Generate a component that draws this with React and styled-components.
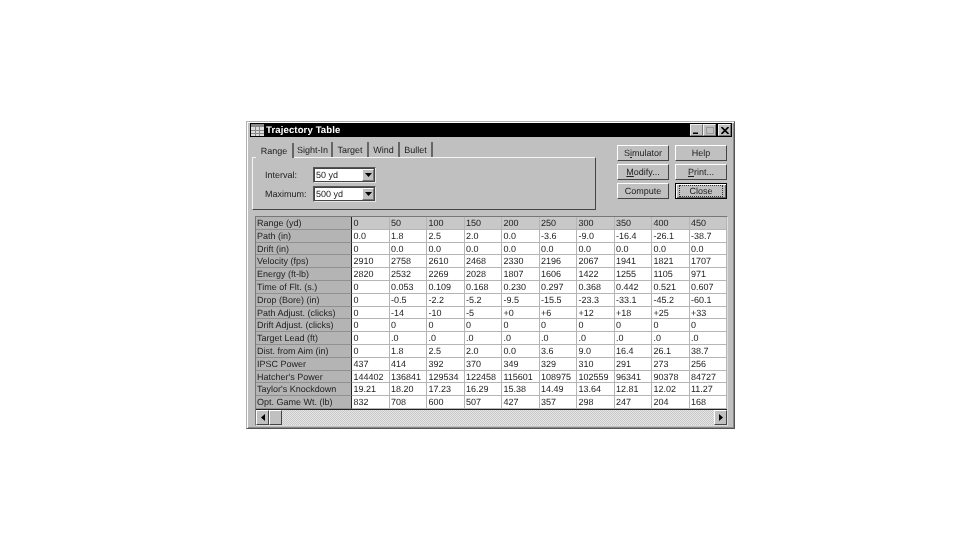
import React from 'react';
import styled, { createGlobalStyle } from 'styled-components';

const Global = createGlobalStyle`
  html, body { margin: 0; padding: 0; background: #fff; }
  body { font-family: "Liberation Sans", Arial, sans-serif; width: 978px; height: 550px; overflow: hidden; text-rendering: geometricPrecision; }
`;
const Page = styled.div`
  width: 978px; height: 550px; padding: 121px 0 0 246px; box-sizing: border-box;
`;
const Window = styled.div`
  width: 489px; height: 308px; box-sizing: border-box; background: #c0c0c0;
  border: 1px solid #b0b0b0; border-right-color: #555; border-bottom-color: #555;
  box-shadow: inset 1px 1px 0 #fff, inset -1px -1px 0 #888;
  padding: 1px 2px 0 3px; display: flex; flex-direction: column;
  filter: blur(0.45px);
`;
const TitleBar = styled.div`
  height: 14px; flex: none; background: #000; display: flex; align-items: center; padding: 0 1px 0 1px; gap: 2px;
`;
const TitleText = styled.span`
  color: #fff; font: bold 9.6px "Liberation Sans", Arial, sans-serif; flex: 1; letter-spacing: 0.1px;
`;
const CapButtons = styled.div`display: flex;`;
const CapButton = styled.div`
  width: 13px; height: 12px; background: #c0c0c0; box-sizing: border-box; margin-left: ${p => p.$gap || 0}px;
  border: 1px solid; border-color: #eee #777 #777 #eee; display: flex; align-items: center; justify-content: center;
`;
const Content = styled.div`display: flex; padding: 5px 0 0 2px; height: 79px; flex: none; box-sizing: border-box;`;
const TabArea = styled.div`width: 344px; display: flex; flex-direction: column;`;
const TabRow = styled.div`height: 15px; display: flex; padding-left: 4px; align-items: flex-end; flex: none;`;
const Tab = styled.div`
  height: 15px; width: ${p => p.$w}px; box-sizing: border-box; font-size: 9px; color: #222;
  display: flex; align-items: center; justify-content: center;
  border-right: 2px solid #666;
  background: #c0c0c0; position: relative; margin-bottom: ${p => p.$active ? -1 : 0}px; z-index: ${p => p.$active ? 1 : 0};
`;
const TabPanel = styled.div`
  height: 53px; box-sizing: border-box; border: 1px solid; border-color: #f4f4f4 #444 #444 #f4f4f4;
  padding: 9px 0 0 12px; display: flex; flex-direction: column; gap: 3px;
`;
const FieldRow = styled.div`display: flex; align-items: center; height: 16px;`;
const FieldLabel = styled.span`width: 48px; font-size: 9px; color: #222;`;
const Combo = styled.div`
  width: 63px; height: 16px; box-sizing: border-box; background: #fff; border: 2px solid; border-color: #555 #e4e4e4 #e4e4e4 #555;
  outline: 1px solid #444; outline-offset: -2px;
  display: flex; align-items: center; justify-content: space-between; font-size: 9px; color: #222; padding-left: 1px;
`;
const ComboArrow = styled.div`
  width: 12px; height: 12px; background: #c0c0c0; border: 1px solid; border-color: #fff #777 #777 #fff; box-sizing: border-box;
  display: flex; align-items: center; justify-content: center;
`;
const ButtonGrid = styled.div`
  margin-left: 21px; margin-top: 3px; display: grid; grid-template-columns: 52px 52px; grid-auto-rows: 16px; column-gap: 6px; row-gap: 3px; align-content: start;
`;
const Button = styled.div`
  box-sizing: border-box; background: #c0c0c0; font-size: 9px; color: #222; display: flex; align-items: center; justify-content: center;
  border: 1px solid; border-color: #fff #444 #444 #fff;
  ${p => p.$def && `
    border: 1px solid #000; box-shadow: inset 1px 1px 0 #fff, inset -1px -1px 0 #666;
  `}
  u { text-decoration: underline; }
`;
const FocusDots = styled.span`border: 1px dotted #333; padding: 0 9px; line-height: 10px;`;
const GridFrame = styled.div`
  margin: 0 0 0 5px; width: 473px; flex: none; border: 1px solid; border-color: #777 #ddd #ddd #777; box-sizing: border-box;
`;
const Table = styled.div`
  display: grid; grid-template-columns: 96px repeat(10, 37.5px); grid-auto-rows: 12.8px; overflow: hidden; border-bottom: 1px solid #222;
`;
const LabelCell = styled.div`
  background: #b4b4b4; font-size: 9px; color: #222; padding-left: 1px; white-space: nowrap; line-height: 12.8px;
  border-right: 1px solid #222; border-bottom: 1px solid #909090; box-sizing: border-box; height: 12.8px;
`;
const Cell = styled.div`
  background: ${p => p.$head ? '#c8c8c8' : '#fff'}; font-size: 9px; color: #222; padding-left: 1.5px; white-space: nowrap; line-height: 12.8px;
  border-right: 1px solid #b5b5b5; border-bottom: 1px solid #b5b5b5; box-sizing: border-box; height: 12.8px; overflow: hidden;
`;
const Scrollbar = styled.div`
  height: 15px; display: flex; justify-content: space-between;
  background: repeating-conic-gradient(#e6e6e6 0 25%, #c8c8c8 0 50%) 0 0 / 2px 2px;
`;
const ScrollBtn = styled.div`
  width: ${p => p.$w || 13}px; height: 15px; background: #c0c0c0; box-sizing: border-box;
  border: 1px solid; border-color: #fff #444 #444 #fff; display: flex; align-items: center; justify-content: center;
`;
const ScrollLeft = styled.div`display: flex;`;

const cols = ['0','50','100','150','200','250','300','350','400','450'];
const rows = [
 ['Path (in)','0.0','1.8','2.5','2.0','0.0','-3.6','-9.0','-16.4','-26.1','-38.7'],
 ['Drift (in)','0','0.0','0.0','0.0','0.0','0.0','0.0','0.0','0.0','0.0'],
 ['Velocity (fps)','2910','2758','2610','2468','2330','2196','2067','1941','1821','1707'],
 ['Energy (ft-lb)','2820','2532','2269','2028','1807','1606','1422','1255','1105','971'],
 ['Time of Flt. (s.)','0','0.053','0.109','0.168','0.230','0.297','0.368','0.442','0.521','0.607'],
 ['Drop (Bore) (in)','0','-0.5','-2.2','-5.2','-9.5','-15.5','-23.3','-33.1','-45.2','-60.1'],
 ['Path Adjust. (clicks)','0','-14','-10','-5','+0','+6','+12','+18','+25','+33'],
 ['Drift Adjust. (clicks)','0','0','0','0','0','0','0','0','0','0'],
 ['Target Lead (ft)','0','.0','.0','.0','.0','.0','.0','.0','.0','.0'],
 ['Dist. from Aim (in)','0','1.8','2.5','2.0','0.0','3.6','9.0','16.4','26.1','38.7'],
 ['IPSC Power','437','414','392','370','349','329','310','291','273','256'],
 ["Hatcher's Power",'144402','136841','129534','122458','115601','108975','102559','96341','90378','84727'],
 ["Taylor's Knockdown",'19.21','18.20','17.23','16.29','15.38','14.49','13.64','12.81','12.02','11.27'],
 ['Opt. Game Wt. (lb)','832','708','600','507','427','357','298','247','204','168'],
];

const Down = () => <svg width="7" height="4" viewBox="0 0 7 4"><path d="M0 0h7L3.5 4z" fill="#000"/></svg>;

export default function App() {
  return (
    <Page>
      <Global />
      <Window>
        <TitleBar>
          <svg width="13" height="12" viewBox="0 0 13 12">
            <rect width="13" height="12" fill="#ddd"/>
            <rect x="0" y="0" width="13" height="3" fill="#8a8a8a"/>
            <path d="M0 6.5h13M0 9.5h13M4.5 3v9M8.5 3v9" stroke="#888" strokeWidth="1"/>
          </svg>
          <TitleText>Trajectory Table</TitleText>
          <CapButtons>
            <CapButton><svg width="7" height="7" viewBox="0 0 7 7"><path d="M0 5.5h5v1.5H0z" fill="#000"/></svg></CapButton>
            <CapButton><svg width="8" height="7" viewBox="0 0 8 7"><rect x=".5" y=".5" width="7" height="6" fill="none" stroke="#999"/></svg></CapButton>
            <CapButton $gap={2}><svg width="8" height="7" viewBox="0 0 8 7"><path d="M.5 0l7 7M7.5 0l-7 7" stroke="#000" strokeWidth="1.6"/></svg></CapButton>
          </CapButtons>
        </TitleBar>
        <Content>
          <TabArea>
            <TabRow>
              <Tab $active $w={38}>Range</Tab>
              <Tab $w={39}>Sight-In</Tab>
              <Tab $w={36}>Target</Tab>
              <Tab $w={31}>Wind</Tab>
              <Tab $w={33}>Bullet</Tab>
            </TabRow>
            <TabPanel>
              <FieldRow><FieldLabel>Interval:</FieldLabel><Combo>50 yd<ComboArrow><Down/></ComboArrow></Combo></FieldRow>
              <FieldRow><FieldLabel>Maximum:</FieldLabel><Combo>500 yd<ComboArrow><Down/></ComboArrow></Combo></FieldRow>
            </TabPanel>
          </TabArea>
          <ButtonGrid>
            <Button>S<u>i</u>mulator</Button>
            <Button>Help</Button>
            <Button><u>M</u>odify...</Button>
            <Button><u>P</u>rint...</Button>
            <Button>Compute</Button>
            <Button $def><FocusDots>Close</FocusDots></Button>
          </ButtonGrid>
        </Content>
        <GridFrame>
          <Table>
            <LabelCell>Range (yd)</LabelCell>
            {cols.map(c => <Cell key={c} $head>{c}</Cell>)}
            {rows.map(r => (
              <React.Fragment key={r[0]}>
                <LabelCell>{r[0]}</LabelCell>
                {r.slice(1).map((v, i) => <Cell key={i}>{v}</Cell>)}
              </React.Fragment>
            ))}
          </Table>
          <Scrollbar>
            <ScrollLeft>
              <ScrollBtn><svg width="4" height="7" viewBox="0 0 4 7"><path d="M4 0v7L0 3.5z" fill="#000"/></svg></ScrollBtn>
              <ScrollBtn $w={13}/>
            </ScrollLeft>
            <ScrollBtn><svg width="4" height="7" viewBox="0 0 4 7"><path d="M0 0v7l4-3.5z" fill="#000"/></svg></ScrollBtn>
          </Scrollbar>
        </GridFrame>
      </Window>
    </Page>
  );
}
